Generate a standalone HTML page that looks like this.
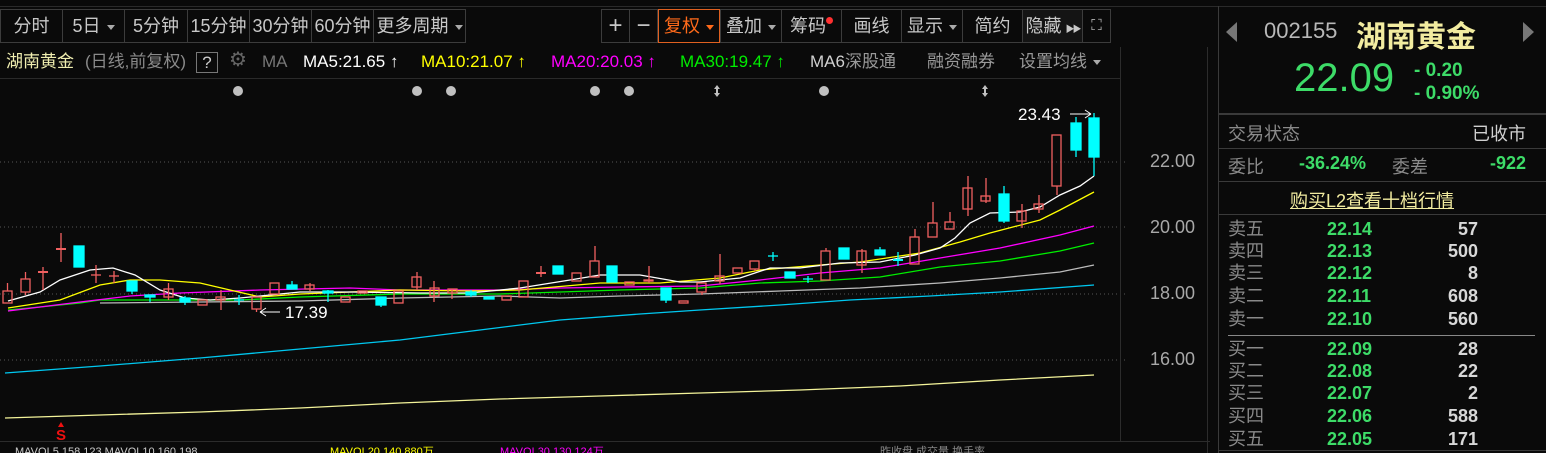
<!DOCTYPE html><html><head><meta charset="utf-8"><style>
*{margin:0;padding:0;box-sizing:border-box}
body{width:1546px;height:453px;background:#0a0a0a;overflow:hidden;position:relative;font-family:"Liberation Sans","Noto Sans CJK SC",sans-serif;color:#c8c8c8}
.a{position:absolute;white-space:nowrap}
.btn{position:absolute;top:9px;height:34px;border:1px solid #3c3c3c;font-size:18px;line-height:32px;text-align:center;color:#c8c8c8;white-space:nowrap;overflow:hidden}
.tri{display:inline-block;width:0;height:0;border-left:4px solid transparent;border-right:4px solid transparent;border-top:5px solid #aaa;vertical-align:middle;margin-left:6px}
.ma{position:absolute;top:51px;font-size:17px;line-height:22px;white-space:nowrap}
.ax{position:absolute;left:1150px;font-size:18px;color:#a8a8a8}
.ob{position:absolute;left:1228px;width:250px;height:22px;font-size:18px;line-height:22px}
.ob .l{position:absolute;left:0;color:#8a8a8a}
.ob .p{position:absolute;left:99px;color:#3ddc68;font-weight:bold}
.ob .v{position:absolute;right:0;color:#d8d8d8;font-weight:bold}
</style></head><body>
<div class="a" style="left:0;top:6px;width:1546px;border-top:1px solid #2a2a2a"></div>
<div class="btn" style="left:0;width:63px">分时</div>
<div class="btn" style="left:62px;width:63px">5日<span class="tri"></span></div>
<div class="btn" style="left:124px;width:64px">5分钟</div>
<div class="btn" style="left:187px;width:63px">15分钟</div>
<div class="btn" style="left:249px;width:63px">30分钟</div>
<div class="btn" style="left:311px;width:63px">60分钟</div>
<div class="btn" style="left:373px;width:93px">更多周期<span class="tri"></span></div>
<div class="btn" style="left:601px;width:29px;font-size:24px">+</div>
<div class="btn" style="left:629px;width:29px;font-size:24px">−</div>
<div class="btn" style="left:658px;width:62px;border-color:#e06020;color:#ff6a1a">复权<span class="tri" style="border-top-color:#ff6a1a"></span></div>
<div class="btn" style="left:720px;width:62px">叠加<span class="tri"></span></div>
<div class="btn" style="left:781px;width:61px">筹码<span style="display:inline-block;width:7px;height:7px;border-radius:50%;background:#ff3030;vertical-align:top;margin-top:7px"></span></div>
<div class="btn" style="left:841px;width:61px">画线</div>
<div class="btn" style="left:901px;width:62px">显示<span class="tri"></span></div>
<div class="btn" style="left:962px;width:61px">简约</div>
<div class="btn" style="left:1022px;width:61px;background:#141414">隐藏<span style="font-size:9px;letter-spacing:-2px;margin-left:4px">▶▶</span></div>
<div class="btn" style="left:1082px;width:29px;font-size:15px">⛶</div>

<div class="ma" style="left:6px;color:#f0eeb0">湖南黄金</div>
<div class="ma" style="left:85px;color:#8a8a8a">(日线,前复权)</div>
<div class="ma" style="left:196px;top:52px;width:22px;height:21px;border:1px solid #777;text-align:center;line-height:19px;color:#ccc">?</div>
<div class="ma" style="left:229px;color:#666;font-size:20px;top:49px">⚙</div>
<div class="ma" style="left:262px;color:#777">MA</div>
<div class="ma" style="left:303px;color:#fff">MA5:21.65 ↑</div>
<div class="ma" style="left:421px;color:#ffff00">MA10:21.07 ↑</div>
<div class="ma" style="left:551px;color:#ff00ff">MA20:20.03 ↑</div>
<div class="ma" style="left:680px;color:#00ee00">MA30:19.47 ↑</div>
<div class="ma" style="left:810px;color:#d0d0d0">MA6<span style="color:#999">深股通</span></div>
<div class="ma" style="left:927px;color:#999">融资融券</div>
<div class="ma" style="left:1019px;color:#999">设置均线<span class="tri"></span></div>
<div class="a" style="left:0;top:78px;width:1120px;border-top:1px solid #2a2a2a"></div>

<svg class="a" style="left:0;top:0" width="1218" height="453">
<g stroke="#555" stroke-dasharray="1,3"><line x1="0" y1="162" x2="1125" y2="162"/><line x1="0" y1="227" x2="1125" y2="227"/><line x1="0" y1="294" x2="1125" y2="294"/><line x1="0" y1="360" x2="1125" y2="360"/></g>
<line x1="1120.5" y1="47" x2="1120.5" y2="441" stroke="#2c2c2c"/>
<line x1="1207.5" y1="47" x2="1207.5" y2="453" stroke="#2c2c2c"/>
<line x1="0" y1="441.5" x2="1210" y2="441.5" stroke="#2c2c2c"/>
<g fill="#c0c0c0"><circle cx="238" cy="91" r="5"/><circle cx="417" cy="91" r="5"/><circle cx="451" cy="91" r="5"/><circle cx="595" cy="91" r="5"/><circle cx="629" cy="91" r="5"/><circle cx="824" cy="91" r="5"/>
<path d="M717 85l3 4h-2v4h2l-3 4l-3-4h2v-4h-2z"/><path d="M985 85l3 4h-2v4h2l-3 4l-3-4h2v-4h-2z"/></g>
<g fill="none" stroke-width="1.3">
<polyline stroke="#f4f49a" points="5,418 100,415 200,412 300,408 400,403 500,399 600,396 700,393 800,390 900,386 1000,380 1094,375"/>
<polyline stroke="#00c8f0" points="5,373 100,366 200,358 300,349 400,340 480,330 560,320 640,314 700,310 780,305 850,300 930,296 1000,292 1094,285"/>
<polyline stroke="#bbb" points="100,303 200,302 300,301 400,298 500,296 560,298 620,296 700,294 780,291 860,288 940,283 1000,278 1060,272 1094,265"/>
<polyline stroke="#00ee00" points="8,310 40,307 80,303 100,300 240,300 300,297 400,294 500,294 560,292 620,290 700,288 760,283 820,281 880,277 940,267 1000,261 1060,251 1094,243"/>
<polyline stroke="#ff00ff" points="8,311 40,307 80,302 130,296 180,293 260,290 350,288 400,290 500,290 560,288 620,287 700,286 760,280 820,273 880,268 940,258 1000,248 1060,235 1094,226"/>
<polyline stroke="#ffff00" points="8,308 60,300 100,285 130,280 160,280 200,283 230,290 260,297 300,294 400,290 470,291 520,290 600,283 660,283 720,278 760,270 820,265 860,262 920,253 960,242 990,233 1040,220 1060,210 1094,192"/>
<polyline stroke="#ffffff" points="8,301 40,292 60,280 90,270 113,268 135,275 160,290 185,298 210,300 240,298 260,296 300,292 350,292 420,293 470,293 520,288 570,280 600,275 640,275 680,282 700,282 740,278 770,268 800,268 840,263 880,262 915,255 940,248 955,238 970,223 990,213 1020,212 1040,207 1060,195 1080,186 1094,176"/>
</g>
<text x="285" y="318" fill="#fff" font-size="17" font-family="Liberation Sans">17.39</text>
<path d="M260 312h20M260 312l6-4M260 312l6 4" stroke="#fff" fill="none"/>
<text x="1018" y="120" fill="#fff" font-size="17" font-family="Liberation Sans">23.43</text>
<path d="M1070 114h21M1091 114l-6-4M1091 114l-6 4" stroke="#fff" fill="none"/>
<text x="61" y="440" fill="#ee1010" font-size="15" font-weight="bold" text-anchor="middle" font-family="Liberation Sans">S</text>
<path d="M61 422l3 5h-6z" fill="#ee1010"/>
<g font-size="11" font-family="Liberation Sans"><text x="15" y="455" fill="#ccc">MAVOL5 158,123 MAVOL10 160,198</text><text x="330" y="455" fill="#ffff00">MAVOL20 140,880万</text><text x="500" y="455" fill="#ff00ff">MAVOL30 130,124万</text><text x="880" y="455" fill="#888">昨收盘 成交量 换手率</text></g>
</svg>

<div class="ax" style="top:151px">22.00</div>
<div class="ax" style="top:217px">20.00</div>
<div class="ax" style="top:283px">18.00</div>
<div class="ax" style="top:349px">16.00</div>

<div class="a" style="left:1218px;top:6px;width:1px;height:447px;background:#3a3a3a"></div>
<div class="a" style="left:1226px;top:22px;width:0;height:0;border-top:10px solid transparent;border-bottom:10px solid transparent;border-right:11px solid #777"></div>
<div class="a" style="left:1523px;top:22px;width:0;height:0;border-top:10px solid transparent;border-bottom:10px solid transparent;border-left:11px solid #777"></div>
<div class="a" style="left:1264px;top:18px;font-size:22px;color:#b8b8b8">002155</div>
<div class="a" style="left:1356px;top:12px;font-size:30px;color:#f2eca0;font-weight:bold">湖南黄金</div>
<div class="a" style="left:1294px;top:56px;font-size:40px;color:#3ddc68">22.09</div>
<div class="a" style="left:1414px;top:59px;font-size:19px;line-height:23px;color:#3ddc68;font-weight:bold">- 0.20<br>- 0.90%</div>
<div class="a" style="left:1219px;top:113px;width:327px;border-top:2px solid #3a3a3a"></div>
<div class="a" style="left:1228px;top:120px;font-size:18px;color:#8a8a8a">交易状态</div>
<div class="a" style="left:1472px;top:120px;font-size:18px;color:#d0d0d0">已收市</div>
<div class="a" style="left:1219px;top:148px;width:327px;border-top:1px solid #3a3a3a"></div>
<div class="a" style="left:1228px;top:153px;font-size:18px;color:#8a8a8a">委比</div>
<div class="a" style="left:1299px;top:153px;font-size:18px;color:#3ddc68;font-weight:bold">-36.24%</div>
<div class="a" style="left:1392px;top:153px;font-size:18px;color:#8a8a8a">委差</div>
<div class="a" style="left:1490px;top:153px;font-size:18px;color:#3ddc68;font-weight:bold">-922</div>
<div class="a" style="left:1219px;top:181px;width:327px;border-top:1px solid #3a3a3a"></div>
<div class="a" style="left:1290px;top:187px;font-size:18px;color:#f2eca0;text-decoration:underline">购买L2查看十档行情</div>
<div class="a" style="left:1219px;top:214px;width:327px;border-top:1px solid #3a3a3a"></div>
<div class="ob" style="top:218px"><span class="l">卖五</span><span class="p">22.14</span><span class="v">57</span></div>
<div class="ob" style="top:240px"><span class="l">卖四</span><span class="p">22.13</span><span class="v">500</span></div>
<div class="ob" style="top:262px"><span class="l">卖三</span><span class="p">22.12</span><span class="v">8</span></div>
<div class="ob" style="top:285px"><span class="l">卖二</span><span class="p">22.11</span><span class="v">608</span></div>
<div class="ob" style="top:308px"><span class="l">卖一</span><span class="p">22.10</span><span class="v">560</span></div>
<div class="a" style="left:1228px;top:335px;width:307px;border-top:1px solid #888"></div>
<div class="ob" style="top:338px"><span class="l">买一</span><span class="p">22.09</span><span class="v">28</span></div>
<div class="ob" style="top:360px"><span class="l">买二</span><span class="p">22.08</span><span class="v">22</span></div>
<div class="ob" style="top:382px"><span class="l">买三</span><span class="p">22.07</span><span class="v">2</span></div>
<div class="ob" style="top:405px"><span class="l">买四</span><span class="p">22.06</span><span class="v">588</span></div>
<div class="ob" style="top:428px"><span class="l">买五</span><span class="p">22.05</span><span class="v">171</span></div>
<div class="a" style="left:1219px;top:450px;width:327px;border-top:1px solid #3a3a3a"></div>

<svg class="a" style="left:0;top:0" width="1120" height="441">
<g stroke="#f06060" fill="none" stroke-width="1.3">
<rect x="3" y="291" width="9" height="12"/><line x1="7.5" y1="283" x2="7.5" y2="291"/>
<rect x="21" y="279" width="9" height="13"/><line x1="25.5" y1="272" x2="25.5" y2="279"/><line x1="25.5" y1="292" x2="25.5" y2="295"/>
<line x1="38" y1="272" x2="48" y2="272" stroke-width="2"/><line x1="43" y1="267" x2="43" y2="290"/>
<line x1="56" y1="249" x2="66" y2="249" stroke-width="2"/><line x1="61" y1="233" x2="61" y2="262"/>
<line x1="91" y1="275" x2="101" y2="275"/><line x1="96" y1="265" x2="96" y2="283"/>
<line x1="109" y1="276" x2="119" y2="276"/><line x1="114" y1="271" x2="114" y2="283"/>
<rect x="164" y="289" width="9" height="8"/><line x1="168.5" y1="283" x2="168.5" y2="300"/>
<rect x="198" y="300" width="9" height="5"/>
<rect x="216" y="297" width="9" height="3"/><line x1="221" y1="290" x2="221" y2="310"/>
<rect x="252" y="297" width="9" height="12"/><line x1="256.5" y1="309" x2="256.5" y2="312"/>
<rect x="270" y="283" width="9" height="11"/>
<rect x="305" y="285" width="9" height="4"/><line x1="310" y1="283" x2="310" y2="291"/>
<rect x="341" y="297" width="9" height="5"/>
<rect x="358" y="291" width="9" height="2"/>
<rect x="394" y="291" width="9" height="12"/>
<rect x="412" y="277" width="9" height="10"/><line x1="417" y1="272" x2="417" y2="290"/>
<rect x="430" y="288" width="9" height="8"/><line x1="434" y1="281" x2="434" y2="302"/>
<rect x="448" y="289" width="9" height="4"/><line x1="452" y1="289" x2="452" y2="299"/>
<rect x="502" y="296" width="9" height="4"/>
<rect x="519" y="281" width="9" height="16"/>
<line x1="536" y1="273" x2="546" y2="273" stroke-width="2"/><line x1="541" y1="266" x2="541" y2="277"/>
<rect x="572" y="273" width="9" height="8"/>
<rect x="590" y="261" width="9" height="16"/><line x1="595" y1="246" x2="595" y2="261"/>
<rect x="625" y="282" width="9" height="3"/>
<rect x="644" y="280" width="9" height="1"/><line x1="649" y1="266" x2="649" y2="283"/>
<rect x="679" y="301" width="9" height="2"/>
<rect x="697" y="283" width="9" height="9"/><line x1="702" y1="292" x2="702" y2="295"/>
<rect x="715" y="276" width="9" height="5"/><line x1="720" y1="254" x2="720" y2="284"/>
<rect x="733" y="268" width="9" height="5"/>
<rect x="750" y="261" width="9" height="8"/><line x1="755" y1="269" x2="755" y2="271"/>
<rect x="821" y="251" width="9" height="29"/><line x1="826" y1="248" x2="826" y2="251"/>
<rect x="857" y="251" width="9" height="14"/><line x1="862" y1="249" x2="862" y2="273"/>
<rect x="910" y="237" width="9" height="27"/><line x1="915" y1="229" x2="915" y2="237"/>
<rect x="928" y="223" width="9" height="14"/><line x1="933" y1="202" x2="933" y2="223"/>
<rect x="945" y="222" width="9" height="7"/><line x1="950" y1="212" x2="950" y2="222"/>
<rect x="963" y="188" width="9" height="21"/><line x1="968" y1="176" x2="968" y2="216"/>
<rect x="981" y="196" width="9" height="5"/><line x1="986" y1="178" x2="986" y2="203"/>
<rect x="1017" y="211" width="9" height="10"/><line x1="1022" y1="204" x2="1022" y2="228"/>
<rect x="1034" y="204" width="9" height="5"/><line x1="1039" y1="195" x2="1039" y2="213"/>
<rect x="1052" y="135" width="9" height="51"/><line x1="1057" y1="186" x2="1057" y2="195"/>
</g>
<g fill="#00ffff" stroke="#00ffff" stroke-width="1.3">
<rect x="74" y="246" width="10" height="21"/>
<rect x="127" y="281" width="10" height="10"/><line x1="132" y1="291" x2="132" y2="294"/>
<rect x="145" y="295" width="10" height="2"/><line x1="150" y1="297" x2="150" y2="302"/>
<rect x="180" y="298" width="10" height="4"/><line x1="185" y1="296" x2="185" y2="305"/>
<line x1="234" y1="300" x2="244" y2="300"/><line x1="239" y1="295" x2="239" y2="305"/>
<rect x="287" y="285" width="10" height="4"/><line x1="292" y1="281" x2="292" y2="285"/>
<rect x="323" y="291" width="10" height="2"/><line x1="328" y1="290" x2="328" y2="302"/>
<rect x="376" y="297" width="10" height="8"/><line x1="381" y1="305" x2="381" y2="307"/>
<rect x="466" y="292" width="10" height="3"/><line x1="471" y1="290" x2="471" y2="297"/>
<rect x="484" y="297" width="10" height="2"/>
<rect x="553" y="266" width="10" height="8"/>
<rect x="607" y="266" width="10" height="16"/>
<rect x="661" y="288" width="10" height="12"/><line x1="666" y1="300" x2="666" y2="303"/>
<line x1="768" y1="256" x2="778" y2="256"/><line x1="773" y1="252" x2="773" y2="261"/>
<rect x="785" y="272" width="10" height="6"/>
<line x1="803" y1="279" x2="813" y2="279"/><line x1="808" y1="276" x2="808" y2="283"/>
<rect x="839" y="248" width="10" height="11"/>
<rect x="875" y="250" width="10" height="5"/><line x1="880" y1="247" x2="880" y2="250"/>
<line x1="893" y1="260" x2="903" y2="260" stroke-width="2"/><line x1="898" y1="252" x2="898" y2="266"/>
<rect x="999" y="194" width="10" height="27"/><line x1="1004" y1="186" x2="1004" y2="223"/>
<rect x="1071" y="123" width="10" height="27"/><line x1="1076" y1="117" x2="1076" y2="157"/>
<rect x="1089" y="118" width="10" height="39"/><line x1="1094" y1="113" x2="1094" y2="176"/>
</g>
</svg>
</body></html>
